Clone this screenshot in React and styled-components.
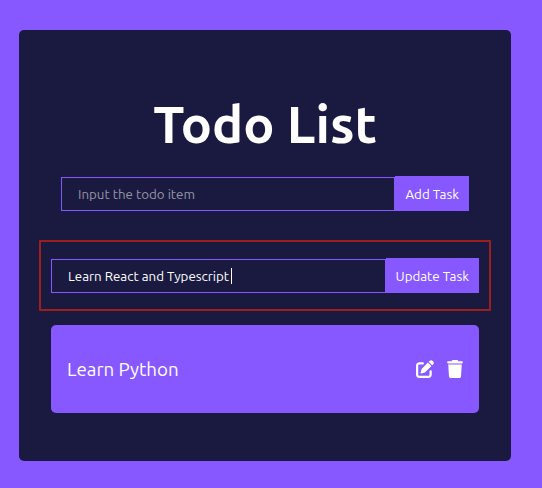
import React, { useState } from "react";
import styled, { createGlobalStyle } from "styled-components";
import { FaPenToSquare, FaTrash } from "react-icons/fa6";

const GlobalStyle = createGlobalStyle`
  * {
    box-sizing: border-box;
  }
  body {
    margin: 0;
    background: #8758ff;
    color: #fff;
    font-family: Ubuntu, "Noto Sans", sans-serif;
  }
`;

const Page = styled.div`
  padding: 30px 31px 27px 19px;
`;

const Card = styled.main`
  padding: 63px 32px 48px;
  border-radius: 5px;
  background: #1a1a40;
`;

const Title = styled.h1`
  margin: 0 0 21px;
  font-size: 52px;
  font-weight: 700;
  line-height: 62px;
  text-align: center;
`;

const TodoForm = styled.form`
  display: flex;
  height: 35px;
  margin: 0 ${(p) => (p.$inset ? "10px" : "0")};
`;

const Field = styled.div`
  position: relative;
  display: flex;
  flex: 1;
  min-width: 0;
  padding-top: 1px;
`;

const TextInput = styled.input`
  flex: 1;
  min-width: 0;
  padding: 0 16px;
  border: 1px solid #8758ff;
  border-radius: 0;
  outline: none;
  background: transparent;
  color: #fff;
  caret-color: transparent;
  font-family: inherit;

  &::placeholder {
    color: #9695a3;
    opacity: 1;
  }
`;

const Caret = styled.span`
  position: absolute;
  top: 10px;
  left: 180px;
  width: 1px;
  height: 16px;
  background: #fff;
`;

const SubmitButton = styled.button`
  padding: 2px 10px 0;
  border: 0;
  background: #8758ff;
  color: #fff;
  font-family: inherit;
  white-space: nowrap;
  cursor: pointer;
`;

const EditFrame = styled.section`
  margin: 29px -12px 14px;
  padding: 16px 10px;
  border: 2px solid #9c1f20;
  border-radius: 1px;
`;

const TodoItem = styled.article`
  display: flex;
  align-items: center;
  justify-content: space-between;
  height: 88px;
  padding: 0 15px 0 16px;
  border-radius: 5px;
  background: #8758ff;
`;

const TodoText = styled.h3`
  margin: 0;
  padding-top: 2px;
  font-weight: 400;
  line-height: 24px;
`;

const Actions = styled.div`
  display: flex;
  align-items: center;
  gap: 12px;
`;

const IconButton = styled.button`
  display: flex;
  padding: 0;
  border: 0;
  background: none;
  color: #fff;
  font-size: 18px;
  cursor: pointer;
`;

export default function App() {
  const [draft, setDraft] = useState("");
  const [edited, setEdited] = useState("Learn React and Typescript");
  const stay = (event) => event.preventDefault();

  return (
    <>
      <GlobalStyle />
      <Page>
        <Card>
          <Title>Todo List</Title>
          <TodoForm $inset onSubmit={stay}>
            <Field>
              <TextInput
                type="text"
                aria-label="New task"
                placeholder="Input the todo item"
                value={draft}
                onChange={(event) => setDraft(event.target.value)}
              />
            </Field>
            <SubmitButton type="submit">Add Task</SubmitButton>
          </TodoForm>
          <EditFrame>
            <TodoForm onSubmit={stay}>
              <Field>
                <TextInput
                  type="text"
                  aria-label="Edit task"
                  value={edited}
                  onChange={(event) => setEdited(event.target.value)}
                />
                <Caret />
              </Field>
              <SubmitButton type="submit">Update Task</SubmitButton>
            </TodoForm>
          </EditFrame>
          <TodoItem>
            <TodoText>Learn Python</TodoText>
            <Actions>
              <IconButton type="button" aria-label="Edit">
                <FaPenToSquare />
              </IconButton>
              <IconButton type="button" aria-label="Delete">
                <FaTrash />
              </IconButton>
            </Actions>
          </TodoItem>
        </Card>
      </Page>
    </>
  );
}
